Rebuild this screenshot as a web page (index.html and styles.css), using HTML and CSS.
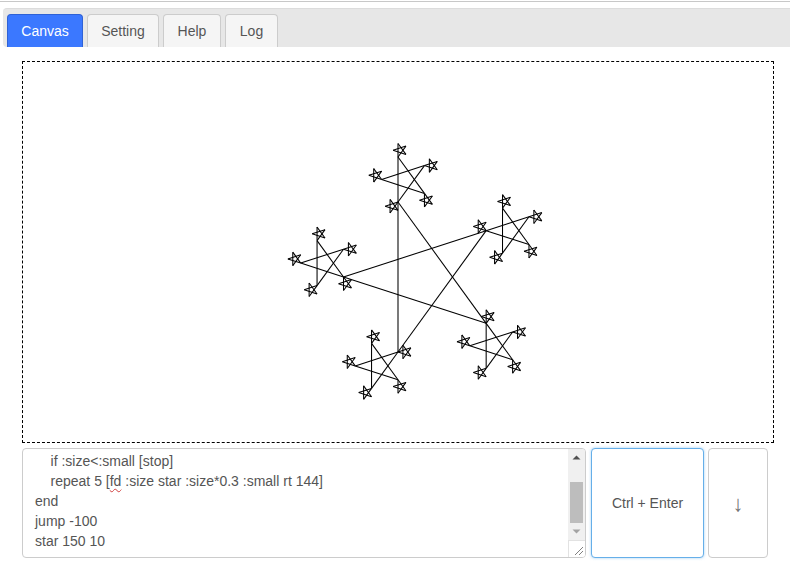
FILE: index.html
```html
<!DOCTYPE html>
<html lang="en">
<head>
<meta charset="utf-8">
<title>Logo</title>
<link rel="stylesheet" href="styles.css">
</head>
<body>
<div class="topline"></div>
<nav class="tabs">
  <a class="tab active">Canvas</a>
  <a class="tab setting">Setting</a>
  <a class="tab help">Help</a>
  <a class="tab log">Log</a>
</nav>
<main class="content">
  <canvas id="turtle" class="stage" width="750" height="380"></canvas>
  <div class="controls">
    <div class="editor">
      <div class="code"><div class="line">    if :size&lt;:small [stop]</div><div class="line">    repeat 5 [<span class="typo">fd</span> :size star :size*0.3 :small rt 144]</div><div class="line">end</div><div class="line">jump -100</div><div class="line">star 150 10</div></div>
      <div class="scrollbar">
        <div class="track">
          <svg class="arrow" width="17" height="17" viewBox="0 0 17 17"><path d="M4.500 10.500L8.500 6.500L12.500 10.500Z" fill="#505050"/></svg>
          <div class="thumb-area"><div class="thumb"></div></div>
          <svg class="arrow" width="17" height="17" viewBox="0 0 17 17"><path d="M4.500 6.500L8.500 10.500L12.500 6.500Z" fill="#a3a3a3"/></svg>
        </div>
        <div class="grip"><svg width="17" height="17" viewBox="0 0 17 17"><path d="M7 15L15 7M11 15L15 11" stroke="#808080" fill="none"/></svg></div>
      </div>
    </div>
    <button class="btn run">Ctrl + Enter</button>
    <button class="btn down">↓</button>
  </div>
</main>
<script src="script.js"></script>
</body>
</html>
```
FILE: styles.css
```css
html, body { margin: 0; padding: 0; background: #fff; }
body {
  width: 790px;
  height: 568px;
  overflow: hidden;
  font-family: "Liberation Sans", Arial, sans-serif;
  font-size: 14px;
  color: #555;
}
.topline {
  height: 1px;
  margin-bottom: 6px;
  border-bottom: 1px solid #c8c8c8;
  box-sizing: content-box;
}
.tabs {
  display: flex;
  gap: 4px;
  align-items: flex-end;
  height: 39px;
  margin-left: 3px;
  padding: 0 0 0 4px;
  background: #e7e7e7;
  border-top: 1px solid #dcdcdc;
  border-radius: 4px 0 0 4px;
  box-sizing: border-box;
}
.tab {
  display: flex;
  align-items: center;
  justify-content: center;
  width: 72px;
  height: 33px;
  padding-bottom: 1px;
  box-sizing: border-box;
  background: #f5f5f5;
  border: 1px solid #ccc;
  border-bottom: 0;
  border-radius: 4px 4px 0 0;
  color: #555;
}
.tab.active {
  width: 76px;
  background: #3b78ff;
  border-color: #2f62d6;
  color: #fff;
}
.tab.help { width: 58px; }
.tab.log { width: 53px; }
.content { padding: 14px 0 0 22px; }
.stage {
  display: block;
  border: 1px dashed #000;
  background: #fff;
}
.controls {
  display: flex;
  margin-top: 5px;
  height: 110px;
}
.editor {
  display: flex;
  width: 564px;
  box-sizing: border-box;
  border: 1px solid #ccc;
  border-radius: 4px;
  overflow: hidden;
}
.code {
  flex: 1;
  padding: 2px 12px;
  line-height: 20px;
  white-space: pre;
  overflow: hidden;
}
.line { height: 20px; }
.typo { text-decoration: underline wavy #d04040 1px; text-underline-offset: 2px; }
.scrollbar {
  display: flex;
  flex-direction: column;
  width: 17px;
  background: #f0f0f0;
}
.track { flex: 1; display: flex; flex-direction: column; }
.arrow { display: block; flex: none; }
.thumb-area { flex: 1; padding-top: 16px; box-sizing: border-box; }
.thumb { width: 13px; height: 41px; margin: 0 auto; background: #bdbdbd; }
.grip { height: 17px; background: #fff; border-top: 1px solid #e2e2e2; border-left: 1px solid #e2e2e2; box-sizing: border-box; }
.grip svg { display: block; margin: -1px 0 0 -1px; }
.btn {
  height: 110px;
  padding: 0;
  background: #fff;
  border: 1px solid #ccc;
  border-radius: 4px;
  font: inherit;
  color: #555;
  box-sizing: border-box;
}
.run {
  width: 113px;
  margin-left: 5px;
  border-color: #66afe9;
  box-shadow: 0 0 3px rgba(102, 175, 233, .6);
}
.down {
  width: 60px;
  margin-left: 4px;
  padding-top: 2px;
  font-size: 22px;
  color: #777;
}
```
FILE: script.js
```js
var canvas = document.getElementById('turtle');
var ctx = canvas.getContext('2d');
var x = 375, y = 190, heading = 0;
ctx.strokeStyle = '#000';
ctx.lineWidth = 1.05;

function forward(d) {
  var rad = heading * Math.PI / 180;
  var nx = x + d * Math.sin(rad);
  var ny = y - d * Math.cos(rad);
  ctx.beginPath();
  ctx.moveTo(x, y);
  ctx.lineTo(nx, ny);
  ctx.stroke();
  x = nx;
  y = ny;
}

function star(size, small) {
  if (size < small) return;
  for (var i = 0; i < 5; i++) {
    forward(size);
    star(size * 0.3, small);
    heading += 144;
  }
}

y += 100;
star(150, 10);
```
